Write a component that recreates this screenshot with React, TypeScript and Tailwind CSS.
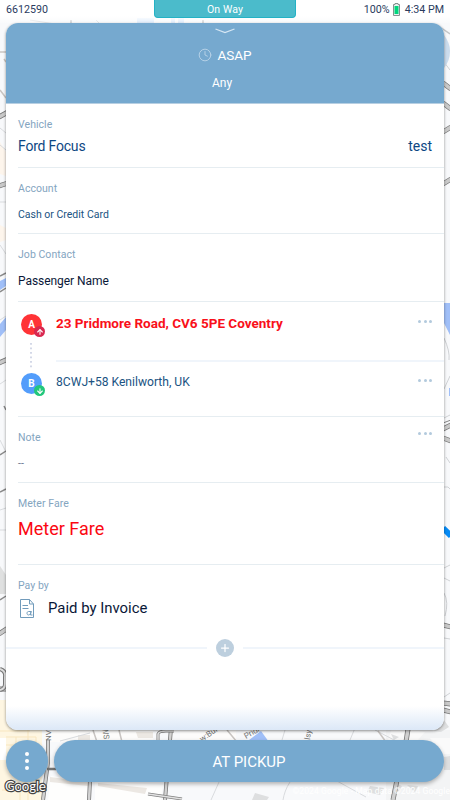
import React from 'react';
import { ArrowDown, ArrowUp, Clock, Plus } from 'lucide-react';

function StreetMap() {
  return (
    <svg className="absolute inset-0 h-full w-full" viewBox="0 0 450 800" fill="none">
      <rect width="450" height="800" fill="#f8f9fb" />

      {/* blocks */}
      <path d="M0 142L6 152V176L0 174ZM0 225L6 228V240L0 242Z" fill="#fdf5ec" />
      <path d="M0 700H42V800H0Z" fill="#fef6e2" />
      <path d="M0 738H6V760H0Z" fill="#fff" />
      <path d="M6 737H36V745H6M16 737V745M28 728V742M0 731H30M2 790H20V800M28 785V800" stroke="#f8e6bf" />
      <path d="M0 566L6 575V594H0Z" fill="#dfe0e0" />
      <path d="M50 730H153V742H50ZM180 730H236V742H180Z" fill="#fdfcfb" />
      <path d="M51 776L87 781V800H48ZM95 781L163 785L161 800H95Z" fill="#fefefd" />
      <path d="M50 777L88 782V786L50 782ZM98 783L147 788L145 794L98 786ZM78 735H90V740H78ZM136 732H153V738H138Z" fill="#ece8e3" />
      <path d="M386 730H450V800H386Z" fill="#f3f4f5" />
      <path d="M392 728L425 732L418 740H388ZM430 738H450V754H440Z" fill="#fafafa" />
      <path d="M255 793L269 797L267 800H252ZM370 786L384 788L380 795L367 792ZM395 783L402 786L398 792ZM407 785L418 786L415 792ZM391 734L399 737L394 740ZM444 757L450 756V770H444Z" fill="#dedfe0" />
      <path d="M434 731L444 720L449 727L441 732Z" fill="#dedfe0" />

      {/* minor paths */}
      <path d="M0 128L6 133M0 145L6 150M0 202H6M0 245L6 254M0 320L6 316M0 384L6 380M0 440L6 452M0 510L6 508M0 530H6M30 20L80 28M96 20L106 30M60 741L90 733M285 730L282 740M219 782L211 800M290 782C286 788 284 794 283 800M337 781L366 797M375 730L398 742M355 728L350 740" stroke="#d9dbde" />
      <path d="M0 52H6M4 59L6 62M0 90L6 98M93 730L97 742M119 730L122 742M227 730L237 742M378 731L386 742" stroke="#c9c5c2" strokeWidth="1.5" />
      <path d="M444 62L450 70M444 338Q450 351 449 360M450 376L444 389M444 418L450 415M446 457L450 463M444 487Q449 486 450 489M444 568L450 565M444 578L450 581M444 593Q449 602 445 616M444 638L450 639M444 697L450 693" stroke="#d0d2d5" />
      <path d="M437 25L450 34" stroke="#c5c7c9" strokeWidth="1.5" />
      <path d="M71 20V30M203 20V30" stroke="#9b9d9f" />

      {/* roads */}
      <path d="M-1 117L8 112M-1 186L8 183M-1 363L8 359M-1 634L8 628M-1 689H8" stroke="#747474" strokeWidth="5" />
      <path d="M-1 117L8 112M-1 186L8 183M-1 363L8 359M-1 634L8 628M-1 689H8" stroke="#c9c9c9" strokeWidth="3.5" />
      <path d="M0 276L6 273M0 292L6 288M0 455L6 451M4 406L6 410M0 492L6 489M0 600L6 596" stroke="#8a8a8a" strokeWidth="1.5" />
      <path d="M0 669Q6 671 5 677V684Q5 689 0 690" stroke="#777" strokeWidth="4" />
      <path d="M0 669Q6 671 5 677V684Q5 689 0 690" stroke="#ddd" strokeWidth="2" />
      <path d="M48 740V762L43 800M90 781L89 800M171 728L165 800" stroke="#777" strokeWidth="4" />
      <path d="M48 740V762L43 800M90 781L89 800M171 728L165 800" stroke="#d2d2d2" strokeWidth="2.5" />
      <path d="M148 794L182 799M158 742V734Q159 731 166 731H174" stroke="#808080" strokeWidth="3" />
      <path d="M148 794L182 799M158 742V734Q159 731 166 731H174" stroke="#e1e1e1" strokeWidth="1.5" />
      <path d="M408 729L406 742M397 780L393 800" stroke="#777" strokeWidth="5" />
      <path d="M408 729L406 742M397 780L393 800" stroke="#d0d0d0" strokeWidth="3.5" />
      <path d="M47 769H56" stroke="#777" strokeWidth="2.5" />
      <path d="M443 83L451 89M443 103L451 109M443 132L451 127M443 184L451 179M443 429L451 425M443 438L451 441M443 625L451 627M443 703L451 704M443 710L451 712" stroke="#777" strokeWidth="5" />
      <path d="M443 83L451 89M443 103L451 109M443 132L451 127M443 184L451 179M443 429L451 425M443 438L451 441M443 625L451 627M443 703L451 704M443 710L451 712" stroke="#c9c9c9" strokeWidth="3.5" />
      <path d="M443 423L451 420" stroke="#858585" />

      {/* water and route */}
      <path d="M0 281L6 278V286L0 290ZM0 324L6 317V330L0 337ZM444 303H450V335L444 323ZM449 388H450V396H449ZM249 740L261 731L269 742H247Z" fill="#a0bff8" />
      <path d="M137 18H154V28H137ZM171 18H175V28H171ZM178 18H184V28H178Z" fill="#d8e8fb" />
      <path d="M444 35Q450 43 450 51Q450 61 444 68Z" fill="#cbdced" />
      <path d="M443 528L451 536" stroke="#078bf5" strokeWidth="6" />

      <g fill="#737475" fontFamily="Roboto, sans-serif" fontSize="8">
        <text transform="translate(202 742) rotate(-35)">w:Bui</text>
        <text transform="translate(246 739) rotate(-30)">Pridr</text>
        <text transform="translate(102 728) rotate(80)">WS</text>
        <text transform="translate(310 740) rotate(-82)">lsy</text>
        <text transform="translate(51 741) rotate(-90)">NV</text>
      </g>
    </svg>
  );
}

function Dots() {
  return (
    <div className="flex gap-[2.5px]">
      <span className="h-[3px] w-[3px] rounded-full bg-[#b2cadd]" />
      <span className="h-[3px] w-[3px] rounded-full bg-[#b2cadd]" />
      <span className="h-[3px] w-[3px] rounded-full bg-[#b2cadd]" />
    </div>
  );
}

function Label({ children }: { children: React.ReactNode }) {
  return <div className="text-[10.5px] leading-[13px] tracking-[0.05px] text-[#84a5bf]">{children}</div>;
}

function StopMarker({ letter, up }: { letter: string; up?: boolean }) {
  const Arrow = up ? ArrowUp : ArrowDown;
  return (
    <div className={`relative flex h-[21px] w-[21px] items-center justify-center rounded-full text-[10px] font-bold text-white ${up ? 'bg-[#ff3336]' : 'bg-[#539dfb]'}`}>
      {letter}
      <span className={`absolute -right-[3px] -bottom-[2px] flex h-[11px] w-[11px] items-center justify-center rounded-full ${up ? 'bg-[#d92850]' : 'bg-[#23c77b]'}`}>
        <Arrow size={8} strokeWidth={3.2} />
      </span>
    </div>
  );
}

function StatusBar() {
  return (
    <header className="relative flex h-[23px] items-start justify-between bg-linear-to-b from-white from-70% to-white/20 px-[6px] text-[10.7px] text-[#2a3b5e]">
      <span className="mt-[3px] leading-[14px]">6612590</span>
      <div className="absolute left-[154px] flex h-[18px] w-[142px] justify-center rounded-b-[4px] border-x border-b border-[#24b2c5] bg-[#4bbbcb] pt-[2px] text-[10.5px] leading-[15px] tracking-[0.1px] text-white">
        On Way
      </div>
      <div className="mt-[3px] flex items-center leading-[14px]">
        <span>100%</span>
        <svg className="-mt-[2px] mr-[5px] ml-[3px]" width="7" height="13" viewBox="0 0 7 13">
          <path d="M2 1.5V.5H5V1.5H6.5V12.5H.5V1.5Z" fill="#e9f1ef" stroke="#85908f" />
          <path d="M1.5 3H5.5V11H1.5Z" fill="#00d67d" />
        </svg>
        <span>4:34 PM</span>
      </div>
    </header>
  );
}

function JobCard() {
  return (
    <main className="mx-[6px] flex h-[707px] flex-col overflow-hidden rounded-[12px] bg-white shadow-[0_1px_3px_rgba(0,0,0,0.45)]">
      <div className="flex h-[81px] shrink-0 flex-col items-center border-b border-[#b7cfe2] bg-[#76a9cf] text-white">
        <svg className="mt-[5px]" width="20" height="6" viewBox="0 0 20 6" fill="none">
          <path d="M.5 1L10 4.5L19.5 1" stroke="#d5e6f3" strokeWidth="1.3" />
        </svg>
        <div className="mt-[13px] flex h-4 items-center gap-[5px] text-[13.5px] leading-4">
          <Clock size={14} strokeWidth={1.6} className="text-[#b9d3e7]" />
          <span>ASAP</span>
        </div>
        <div className="mt-[12px] mr-[6px] text-[12px] leading-4">Any</div>
      </div>

      <section className="h-[64px] shrink-0 pl-3">
        <div className="h-full border-b border-[#e6edf1] pt-[14px] pr-3">
          <Label>Vehicle</Label>
          <div className="mt-[7px] flex justify-between text-[14px] leading-4 tracking-[-0.2px] text-[#0d4783]">
            <span>Ford Focus</span>
            <span className="tracking-normal">test</span>
          </div>
        </div>
      </section>

      <section className="h-[66px] shrink-0 pl-3">
        <div className="h-full border-b border-[#e6edf1] pt-[14px]">
          <Label>Account</Label>
          <div className="mt-[13px] text-[10.5px] leading-[14px] text-[#205382]">Cash or Credit Card</div>
        </div>
      </section>

      <section className="h-[68px] shrink-0 pl-3">
        <div className="h-full border-b border-[#e6edf1] pt-[14px]">
          <Label>Job Contact</Label>
          <div className="mt-[12px] text-[12px] leading-4 tracking-[-0.05px] text-[#0a1838]">Passenger Name</div>
        </div>
      </section>

      <section className="flex h-[115px] shrink-0 pl-3">
        <div className="flex w-[38px] flex-col border-b border-[#e6edf1] pt-[12px] pl-[3px]">
          <StopMarker letter="A" up />
          <svg className="my-[8px] ml-[9px]" width="2" height="25" viewBox="0 0 2 25">
            <path d="M1 0V25" stroke="#c5cbdf" strokeWidth="1.5" strokeDasharray="1.8 2.7" />
          </svg>
          <div className="-mt-[3px]"><StopMarker letter="B" /></div>
        </div>
        <div className="flex-1">
          <div className="flex h-[60px] justify-between border-b-2 border-[#f0f5fb] pr-3">
            <div className="mt-[13px] text-[13.5px] leading-4 font-bold text-[#f9101a]">23 Pridmore Road, CV6 5PE Coventry</div>
            <div className="mt-[18px]"><Dots /></div>
          </div>
          <div className="flex h-[55px] justify-between border-b border-[#e6edf1] pr-3">
            <div className="mt-[12px] text-[12.1px] leading-4 text-[#205382]">8CWJ+58 Kenilworth, UK</div>
            <div className="mt-[17px]"><Dots /></div>
          </div>
        </div>
      </section>

      <section className="h-[66px] shrink-0 pl-3">
        <div className="flex h-full justify-between border-b border-[#e6edf1] pr-3">
          <div className="pt-[14px]">
            <Label>Note</Label>
            <div className="mt-[14px] text-[10.5px] leading-3 text-[#6b7890]">--</div>
          </div>
          <div className="mt-[15px]"><Dots /></div>
        </div>
      </section>

      <section className="h-[82px] shrink-0 pl-3">
        <div className="h-full border-b border-[#e6edf1] pt-[14px]">
          <Label>Meter Fare</Label>
          <div className="mt-[9px] text-[18px] leading-5 text-[#fb0712]">Meter Fare</div>
        </div>
      </section>

      <section className="h-[74px] shrink-0 px-3 pt-[14px]">
        <Label>Pay by</Label>
        <div className="mt-[6px] flex items-center gap-[13px] pl-[1px]">
          <svg width="16" height="19" viewBox="0 0 16 19" fill="none" stroke="#719bbb">
            <path d="M1.5.5H10.5L14.5 5V18.5H1.5ZM10.5.5V5H14.5M3.5 6.5H9M3.5 9.5H9.5" />
            <path d="M12.5 12.5H9.5C7.5 12.5 7.5 16 9.5 16C11.5 16 12 13 12 12.5L11.5 16H13.5" />
          </svg>
          <span className="text-[14.9px] leading-5 text-[#0a1838]">Paid by Invoice</span>
        </div>
      </section>

      <div className="flex h-[18px] shrink-0 items-center gap-[9px]">
        <div className="h-[2px] flex-1 bg-[#f0f5fb]" />
        <button className="flex h-[18px] w-[18px] items-center justify-center rounded-full bg-[#bdcfde] text-white">
          <Plus size={12} strokeWidth={2.5} />
        </button>
        <div className="h-[2px] flex-1 bg-[#f0f5fb]" />
      </div>

      <div className="mt-auto h-6 shrink-0 bg-linear-to-b from-white to-[#dce8f7]" />
    </main>
  );
}

export default function App() {
  return (
    <div className="relative h-[800px] w-[450px] overflow-hidden font-[Roboto,sans-serif]">
      <StreetMap />
      <div className="relative flex h-full flex-col">
        <StatusBar />
        <JobCard />
        <footer className="mt-[10px] flex gap-[6px] px-[6px]">
          <button className="flex h-[42px] w-[42px] flex-col items-center justify-center gap-[3px] rounded-full bg-[#76a9cf] shadow-[0_2px_4px_rgba(0,0,0,0.3)]">
            <span className="h-1 w-1 rounded-full bg-white" />
            <span className="h-1 w-1 rounded-full bg-white" />
            <span className="h-1 w-1 rounded-full bg-white" />
          </button>
          <button className="h-[42px] flex-1 rounded-full bg-[#76a9cf] pt-[2px] text-[15px] text-white shadow-[0_2px_4px_rgba(0,0,0,0.3)]">
            AT PICKUP
          </button>
        </footer>
        <div className="flex items-start justify-between pl-[3px]">
          <svg className="-mt-[4px] shrink-0" width="48" height="22" viewBox="0 0 48 22">
            <text x="2" y="13" textLength="41" fontFamily="Lato, sans-serif" fontSize="13.5" fill="#fff" stroke="#444" strokeWidth="2.5" paintOrder="stroke">Google</text>
          </svg>
          <span className="mt-[3px] text-[8.5px] leading-3 tracking-[0.1px] whitespace-nowrap text-white">©2024 Google - Map data ©2024 Google</span>
        </div>
      </div>
    </div>
  );
}
